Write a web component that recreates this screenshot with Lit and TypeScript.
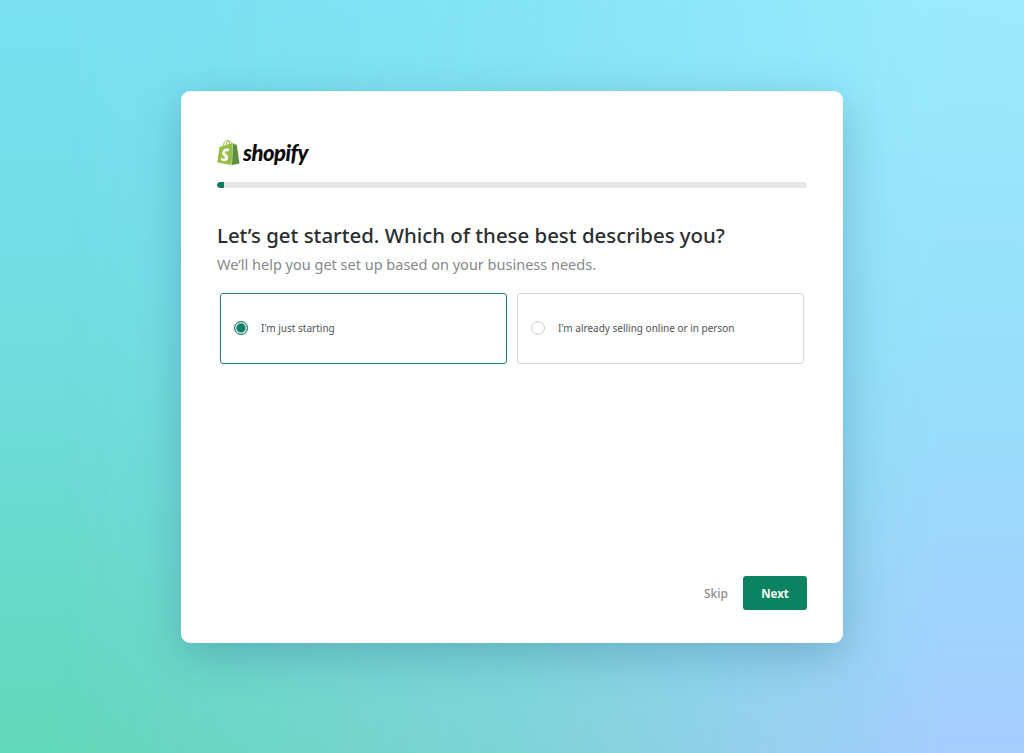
import { LitElement, html, css } from "lit";
import { customElement } from "lit/decorators.js";

@customElement("app-root")
export class AppRoot extends LitElement {
  static styles = css`
    :host {
      display: block;
      width: 100%;
      height: 753px;
      overflow: hidden;
      font-family: "Noto Sans", "Open Sans", sans-serif;
    }
    .page {
      position: relative;
      box-sizing: border-box;
      height: 753px;
      padding: 91px 181px 110px 181px;
      background: linear-gradient(180deg, #78e0f2 0%, #70dde0 45%, #62d8ba 100%);
    }
    .page::before {
      content: "";
      position: absolute;
      inset: 0;
      background:
        radial-gradient(560px 220px at 50% 0%, rgba(148, 234, 252, 0.9) 0%, rgba(148, 234, 252, 0) 100%),
        linear-gradient(180deg, #9ceafb 0%, #96e0fb 45%, #a5cdfe 100%);
      -webkit-mask-image: linear-gradient(90deg, transparent 5%, rgba(0, 0, 0, 0.42) 50%, #000 92%);
      mask-image: linear-gradient(90deg, transparent 5%, rgba(0, 0, 0, 0.42) 50%, #000 92%);
    }
    .card {
      position: relative;
      box-sizing: border-box;
      height: 552px;
      background: #fff;
      border-radius: 9px;
      box-shadow: 0 12px 44px rgba(40, 100, 130, 0.33);
      padding: 46px 36px 33px 36px;
      display: flex;
      flex-direction: column;
    }
    .logo {
      display: flex;
      align-items: center;
      gap: 3px;
      height: 30px;
    }
    .logo svg {
      width: 23px;
      height: 27px;
      display: block;
    }
    .wordmark {
      font-family: "Lato", sans-serif;
      font-weight: 900;
      font-style: italic;
      font-size: 22px;
      letter-spacing: -0.5px;
      color: #0b0b0b;
      line-height: 32px;
      padding-top: 1px;
    }
    .track {
      margin-top: 15px;
      height: 6px;
      border-radius: 3px;
      background: #e6e7e7;
      overflow: hidden;
    }
    .fill {
      height: 100%;
      border-radius: 3px 1px 1px 3px;
      background: #0c7a5e;
    }
    h1 {
      margin: 32px 0 0 0;
      font-size: 20.4px;
      line-height: 30px;
      font-weight: 500;
      color: #2b2e30;
    }
    .sub {
      margin: 5px 0 0 0;
      font-size: 14.5px;
      line-height: 19px;
      color: #85888b;
    }
    .options {
      margin-top: 19px;
      padding: 0 3px;
      display: grid;
      grid-template-columns: 1fr 1fr;
      gap: 10px;
    }
    .option {
      box-sizing: border-box;
      height: 71px;
      border: 1px solid #d5d8da;
      border-radius: 3px;
      display: flex;
      align-items: center;
      gap: 13px;
      padding: 0 13px 1px;
      font-size: 10px;
      color: #505356;
    }
    .option.on {
      border-color: #2f7d72;
    }
    .radio {
      box-sizing: border-box;
      width: 14px;
      height: 14px;
      border-radius: 50%;
      border: 1.5px solid #c9cccf;
      flex: none;
    }
    .on .radio {
      border-color: #0f8065;
      background: #0f8065;
      box-shadow: inset 0 0 0 1.3px #fff;
    }
    .spacer {
      flex: 1;
    }
    .footer {
      display: flex;
      justify-content: flex-end;
      align-items: center;
      gap: 15px;
    }
    .skip {
      font-size: 12px;
      font-weight: 500;
      color: #8a8d90;
    }
    .next {
      box-sizing: border-box;
      width: 64px;
      height: 34px;
      border: none;
      border-radius: 3px;
      background: #0b8360;
      color: #f4fbf8;
      font-family: inherit;
      font-size: 11.5px;
      font-weight: 700;
      padding: 0;
    }
  `;

  render() {
    return html`
      <div class="page">
        <div class="card">
          <div class="logo">
            <svg viewBox="1 0 22 24" aria-hidden="true">
              <path fill="#95bf47" d="M11.71 11.305s-.81-.424-1.774-.424c-1.447 0-1.504.906-1.504 1.141 0 1.232 3.24 1.715 3.24 4.629 0 2.295-1.44 3.76-3.406 3.76-2.354 0-3.54-1.465-3.54-1.465l.646-2.086s1.245 1.066 2.28 1.066c.675 0 .975-.545.975-.932 0-1.619-2.654-1.694-2.654-4.359-.034-2.237 1.571-4.416 4.827-4.416 1.257 0 1.875.361 1.875.361l-.945 2.715-.02.01zM11.17.83c.136 0 .271.038.405.135-.984.465-2.064 1.639-2.508 3.992-.656.213-1.293.405-1.889.578C7.697 3.75 8.951.84 11.17.83zm1.235 2.949v.135c-.754.232-1.583.484-2.394.736.466-1.777 1.333-2.645 2.085-2.971.193.501.309 1.176.309 2.1zm.539-2.234c.694.074 1.141.867 1.429 1.755-.349.114-.735.231-1.158.366v-.252c0-.752-.096-1.371-.271-1.871v.002zm2.992 1.289c-.02 0-.06.021-.078.021s-.289.075-.714.21c-.423-1.233-1.176-2.37-2.508-2.37h-.115C12.135.209 11.669 0 11.265 0 8.159 0 6.675 3.877 6.21 5.846c-1.194.365-2.063.636-2.16.674-.675.213-.694.232-.772.87-.075.462-1.83 14.063-1.83 14.063L15.009 24l.927-21.166z"></path>
              <path fill="#5e8e3e" d="M15.337 23.979l7.216-1.561s-2.604-17.613-2.625-17.73c-.018-.116-.114-.192-.211-.192s-1.929-.136-1.929-.136-1.275-1.274-1.439-1.411c-.045-.037-.075-.057-.121-.074l-.914 21.104h.023z"></path>
            </svg>
            <span class="wordmark">shopify</span>
          </div>
          <div class="track"><div class="fill" style="width: ${(7 / 590) * 100}%"></div></div>
          <h1>Let’s get started. Which of these best describes you?</h1>
          <p class="sub">We’ll help you get set up based on your business needs.</p>
          <div class="options">
            <div class="option on"><span class="radio"></span><span>I'm just starting</span></div>
            <div class="option"><span class="radio"></span><span>I'm already selling online or in person</span></div>
          </div>
          <div class="spacer"></div>
          <div class="footer">
            <span class="skip">Skip</span>
            <button class="next">Next</button>
          </div>
        </div>
      </div>
    `;
  }
}
